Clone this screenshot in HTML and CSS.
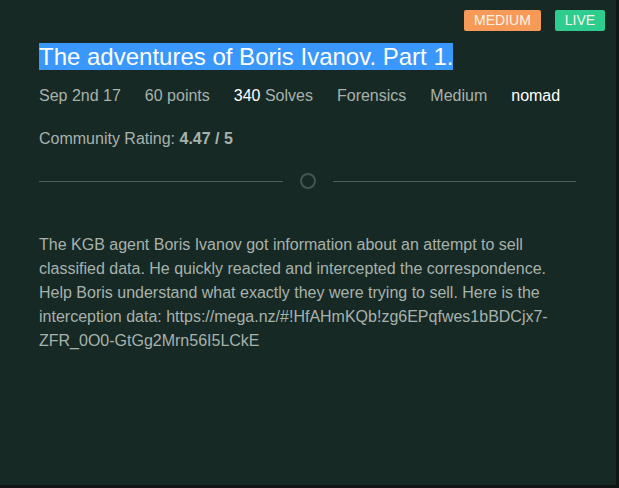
FILE: index.html
```html
<!DOCTYPE html>
<html>
<head>
<meta charset="utf-8">
<link rel="stylesheet" href="styles.css">
</head>
<body>
<div class="panel">
  <div class="badges">
    <span class="badge badge-medium">MEDIUM</span>
    <span class="badge badge-live">LIVE</span>
  </div>
  <h1 class="title"><span class="selected">The adventures of Boris Ivanov. Part 1.</span></h1>
  <div class="meta">
    <span class="meta-item">Sep 2nd 17</span>
    <span class="meta-item">60 points</span>
    <span class="meta-item"><span class="hl">340</span> Solves</span>
    <span class="meta-item">Forensics</span>
    <span class="meta-item">Medium</span>
    <span class="meta-item hl">nomad</span>
  </div>
  <div class="rating">Community Rating: <b>4.47 / 5</b></div>
  <div class="divider">
    <span class="line"></span>
    <span class="circle"></span>
    <span class="line"></span>
  </div>
  <p class="desc">The KGB agent Boris Ivanov got information about an attempt to sell classified data. He quickly reacted and intercepted the correspondence. Help Boris understand what exactly they were trying to sell. Here is the interception data: https://mega.nz/#!HfAHmKQb!zg6EPqfwes1bBDCjx7-ZFR_0O0-GtGg2Mrn56I5LCkE</p>
</div>
</body>
</html>
```
FILE: styles.css
```css
html, body {
  margin: 0;
  padding: 0;
  background: #111513;
}
body {
  width: 619px;
  height: 488px;
  overflow: hidden;
  font-family: "Liberation Sans", Arial, sans-serif;
}
.panel {
  width: 616px;
  height: 485px;
  background: #172924;
  box-sizing: border-box;
  padding: 10px 40px 0 39px;
  color: #a7b2ad;
}
.badges {
  display: flex;
  justify-content: flex-end;
  gap: 14px;
  margin-right: -29px;
}
.badge {
  display: inline-block;
  height: 21px;
  line-height: 21px;
  font-size: 14px;
  color: #fbf5ea;
  border-radius: 2px;
  text-align: center;
}
.badge-medium {
  width: 77px;
  background: #f79a57;
}
.badge-live {
  width: 50px;
  background: #2ecc8e;
}
.title {
  margin: 12px 0 0 0;
  font-size: 24px;
  font-weight: normal;
  line-height: 28px;
  color: #ffffff;
}
.selected {
  background: #3a97fc;
}
.meta {
  display: flex;
  gap: 24px;
  margin-top: 15px;
  font-size: 16px;
  line-height: 20px;
}
.hl {
  color: #ffffff;
}
.rating {
  margin-top: 23px;
  font-size: 16px;
  line-height: 20px;
}
.rating b {
  font-weight: bold;
}
.divider {
  display: flex;
  align-items: center;
  margin-top: 24px;
  height: 16px;
}
.line {
  flex: 1;
  height: 1px;
  background: #4a5a55;
}
.circle {
  width: 12px;
  height: 12px;
  border: 2px solid #45544f;
  border-radius: 50%;
  margin: 0 17px 0 17px;
}
.desc {
  margin: 44px 0 0 0;
  font-size: 16px;
  line-height: 24px;
}
```
